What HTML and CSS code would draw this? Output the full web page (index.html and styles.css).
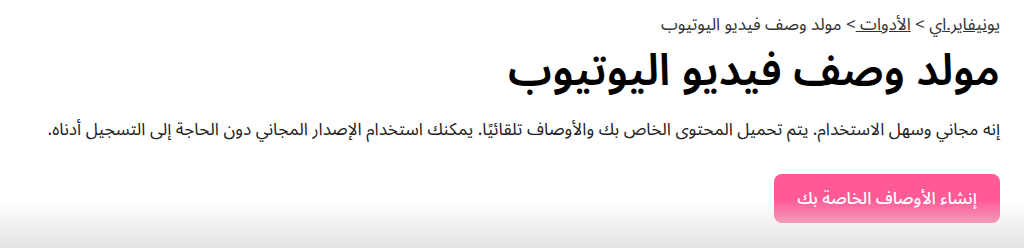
FILE: index.html
```html
<!DOCTYPE html>
<html lang="ar" dir="rtl">
<head>
<meta charset="utf-8">
<link rel="stylesheet" href="styles.css">
</head>
<body>
<main class="page">
  <nav class="crumbs"><a href="#" class="crumb-link">يونيفاير.اي</a> <span class="sep">&gt;</span> <a href="#" class="crumb-link">الأدوات </a><span class="sep">&gt;</span> <span class="current">مولد وصف فيديو اليوتيوب</span></nav>
  <h1 class="title">مولد وصف فيديو اليوتيوب</h1>
  <p class="lead">إنه مجاني وسهل الاستخدام. يتم تحميل المحتوى الخاص بك والأوصاف تلقائيًا. يمكنك استخدام الإصدار المجاني دون الحاجة إلى التسجيل أدناه.</p>
  <div class="actions">
    <button class="cta">إنشاء الأوصاف الخاصة بك</button>
  </div>
</main>
<div class="fade"></div>
</body>
</html>
```

FILE: styles.css
```css
html, body {
  margin: 0;
  padding: 0;
  background: #fff;
}
body {
  font-family: "Noto Sans Arabic", "DejaVu Sans", sans-serif;
  color: #222;
  height: 248px;
  overflow: hidden;
  position: relative;
}
.page {
  padding: 12px 24px 0 24px;
}
.crumbs {
  font-size: 17px;
  line-height: 26px;
  color: #333;
}
.crumb-link {
  color: #333;
  text-decoration: underline;
}
.title {
  margin: 2px 0 0 0;
  font-size: 44px;
  line-height: 62px;
  font-weight: 600;
  color: #000;
}
.lead {
  margin: 14px 0 0 0;
  font-size: 17.3px;
  line-height: 28px;
  color: #222;
}
.actions {
  display: flex;
  margin-top: 30px;
}
.cta {
  font-family: "Noto Sans Arabic", "DejaVu Sans", sans-serif;
  font-size: 17px;
  font-weight: 500;
  color: #fff;
  background: #ff5a96;
  border: none;
  border-radius: 8px;
  width: 226px;
  height: 49px;
  padding: 0;
}
.fade {
  position: absolute;
  left: 0;
  right: 0;
  bottom: 0;
  height: 48px;
  background: linear-gradient(to bottom, rgba(232,232,232,0), rgba(228,228,228,1));
  pointer-events: none;
}
```
